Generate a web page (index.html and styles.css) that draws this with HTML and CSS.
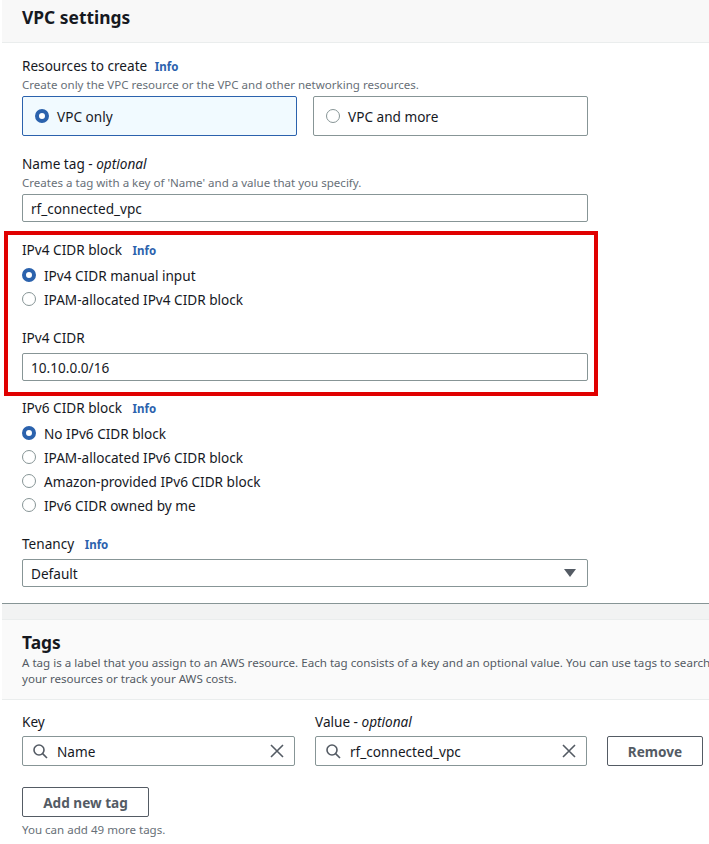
FILE: index.html
```html
<!DOCTYPE html>
<html lang="en">
<head>
    <meta charset="UTF-8">
    <meta name="viewport" content="width=device-width, initial-scale=1.0">
    <title>VPC settings</title>
    <link rel="stylesheet" href="styles.css">
</head>
<body>
    <section class="panel">
        <div class="panel-header">
            <h2>VPC settings</h2>
        </div>
        <div class="panel-body">
            <div class="field field-resources">
                <div class="label">Resources to create <a class="info">Info</a></div>
                <div class="hint">Create only the VPC resource or the VPC and other networking resources.</div>
                <div class="tiles">
                    <div class="tile tile-on"><span class="radio radio-on"></span>VPC only</div>
                    <div class="tile"><span class="radio"></span>VPC and more</div>
                </div>
            </div>

            <div class="field field-name">
                <div class="label">Name tag - <em>optional</em></div>
                <div class="hint">Creates a tag with a key of 'Name' and a value that you specify.</div>
                <div class="input">rf_connected_vpc</div>
            </div>

            <!-- red annotation box from the screenshot -->
            <div class="highlight">
                <div class="label">IPv4 CIDR block <a class="info">Info</a></div>
                <div class="radio-group">
                    <div class="radio-row"><span class="radio radio-on"></span>IPv4 CIDR manual input</div>
                    <div class="radio-row"><span class="radio"></span>IPAM-allocated IPv4 CIDR block</div>
                </div>
                <div class="label label-cidr">IPv4 CIDR</div>
                <div class="input">10.10.0.0/16</div>
            </div>

            <div class="field field-ipv6">
                <div class="label">IPv6 CIDR block <a class="info">Info</a></div>
                <div class="radio-group">
                    <div class="radio-row"><span class="radio radio-on"></span>No IPv6 CIDR block</div>
                    <div class="radio-row"><span class="radio"></span>IPAM-allocated IPv6 CIDR block</div>
                    <div class="radio-row"><span class="radio"></span>Amazon-provided IPv6 CIDR block</div>
                    <div class="radio-row"><span class="radio"></span>IPv6 CIDR owned by me</div>
                </div>
            </div>

            <div class="field field-tenancy">
                <div class="label">Tenancy <a class="info">Info</a></div>
                <div class="input select">Default<span class="caret"></span></div>
            </div>
        </div>
    </section>

    <section class="panel panel-tags">
        <div class="panel-header tags-header">
            <h2>Tags</h2>
            <p>A tag is a label that you assign to an AWS resource. Each tag consists of a key and an optional value. You can use tags to search<br>your resources or track your AWS costs.</p>
        </div>
        <div class="tags-body">
            <div class="tag-row">
                <div class="tag-col">
                    <div class="label">Key</div>
                    <div class="input search">
                        <svg class="icon" viewBox="0 0 16 16"><circle cx="7" cy="7" r="5"/><path d="M10.6 10.6 15 15"/></svg>
                        <span class="search-text">Name</span>
                        <svg class="icon" viewBox="0 0 16 16"><path d="M2 2l12 12M14 2 2 14"/></svg>
                    </div>
                </div>
                <div class="tag-col">
                    <div class="label">Value - <em>optional</em></div>
                    <div class="input search">
                        <svg class="icon" viewBox="0 0 16 16"><circle cx="7" cy="7" r="5"/><path d="M10.6 10.6 15 15"/></svg>
                        <span class="search-text">rf_connected_vpc</span>
                        <svg class="icon" viewBox="0 0 16 16"><path d="M2 2l12 12M14 2 2 14"/></svg>
                    </div>
                </div>
                <button class="btn btn-remove">Remove</button>
            </div>
            <button class="btn btn-add">Add new tag</button>
            <div class="hint hint-tags">You can add 49 more tags.</div>
        </div>
    </section>
</body>
</html>
```

FILE: styles.css
```css
html, body {
    height: 844px;
    overflow: hidden;
}
body {
    margin: 0;
    width: 709px;
    background: #fff;
    color: #16191f;
    font-family: "Noto Sans", "Open Sans", sans-serif;
    font-size: 13.6px;
}
h2 {
    margin: 0;
    font-size: 17.4px;
    font-weight: 700;
}

.panel {
    margin-left: 2px;
}
.panel-header {
    height: 43px;
    box-sizing: border-box;
    padding: 5px 0 0 20px;
    line-height: 25px;
    background: #f8f8f8;
    border-bottom: 1px solid #eaeded;
}
.panel-body {
    height: 561px;
    box-sizing: border-box;
    padding: 0 0 0 20px;
    border-bottom: 1px solid #879596;
}

.label {
    height: 20px;
    line-height: 20px;
}
.label em {
    font-style: italic;
}
.info {
    margin-left: 7px;
    color: #2b62ad;
    font-size: 11.5px;
    font-weight: 700;
}
.hint {
    height: 16px;
    line-height: 18px;
    color: #687078;
    font-size: 11.55px;
}

.field-resources {
    padding-top: 13px;
}
.field-resources .info {
    margin-left: 4px;
}
.field-name {
    padding-top: 18px;
}
.field-ipv6 {
    padding-top: 2px;
}
.field-tenancy {
    padding-top: 17px;
}

.tiles {
    display: flex;
    gap: 16px;
    margin-top: 4px;
}
.tile {
    display: flex;
    align-items: center;
    width: 275px;
    height: 40px;
    box-sizing: border-box;
    padding-left: 12px;
    border: 1px solid #879596;
    border-radius: 2px;
}
.tile-on {
    background: #f1faff;
    border-color: #2b62ad;
}
.tile .radio {
    margin-right: 8px;
}

.radio {
    flex: none;
    display: inline-block;
    width: 14px;
    height: 14px;
    box-sizing: border-box;
    margin-right: 8px;
    background: #fff;
    border: 1px solid #879596;
    border-radius: 50%;
}
.radio-on {
    border: 4px solid #2b62ad;
}

.radio-group {
    margin-top: 3px;
}
.radio-row {
    display: flex;
    align-items: center;
    height: 24px;
}

.input {
    display: flex;
    align-items: center;
    width: 566px;
    height: 28px;
    box-sizing: border-box;
    padding-left: 8px;
    background: #fff;
    border: 1px solid #879596;
    border-radius: 2px;
}
.field-name .input {
    margin-top: 4px;
}
.field-tenancy .input {
    margin-top: 5px;
}

.highlight {
    width: 594px;
    height: 165px;
    box-sizing: border-box;
    margin: 9px 0 0 -18px;
    padding: 5px 0 0 14px;
    border: 4px solid #e00000;
}
.label-cidr {
    margin: 17px 0 5px;
}

.select {
    justify-content: space-between;
    padding-right: 11px;
}
.caret {
    width: 0;
    height: 0;
    border-left: 6px solid transparent;
    border-right: 6px solid transparent;
    border-top: 8px solid #545b64;
}

.panel-tags {
    background: #f2f3f3;
    padding-top: 15px;
}
.tags-header {
    height: 81px;
    padding-top: 10px;
    background: #fafafa;
    border-top: 1px solid #eaeded;
    white-space: nowrap;
}
.tags-header p {
    margin: 0;
    color: #545b64;
    font-size: 11.6px;
    line-height: 16px;
}
.tags-body {
    height: 144px;
    box-sizing: border-box;
    padding: 12px 0 0 20px;
    background: #fff;
}

.tag-row {
    display: flex;
    align-items: flex-end;
}
.tag-col {
    margin-right: 20px;
}
.tag-col .label {
    margin-bottom: 4px;
}
.search {
    width: 273px;
    height: 30px;
    padding: 0 9px;
    gap: 9px;
}
.search-text {
    flex: 1;
}
.icon {
    flex: none;
    width: 16px;
    height: 16px;
    fill: none;
    stroke: #545b64;
    stroke-width: 1.6;
}
.tag-col:nth-child(2) .search {
    width: 272px;
}

.btn {
    box-sizing: border-box;
    height: 30px;
    padding: 0;
    background: #fff;
    color: #545b64;
    border: 1px solid #545b64;
    border-radius: 2px;
    font-family: inherit;
    font-size: 13.6px;
    font-weight: 700;
}
.btn-remove {
    width: 96px;
}
.btn-add {
    display: block;
    width: 127px;
    margin-top: 21px;
}
.hint-tags {
    margin-top: 4px;
}
```
